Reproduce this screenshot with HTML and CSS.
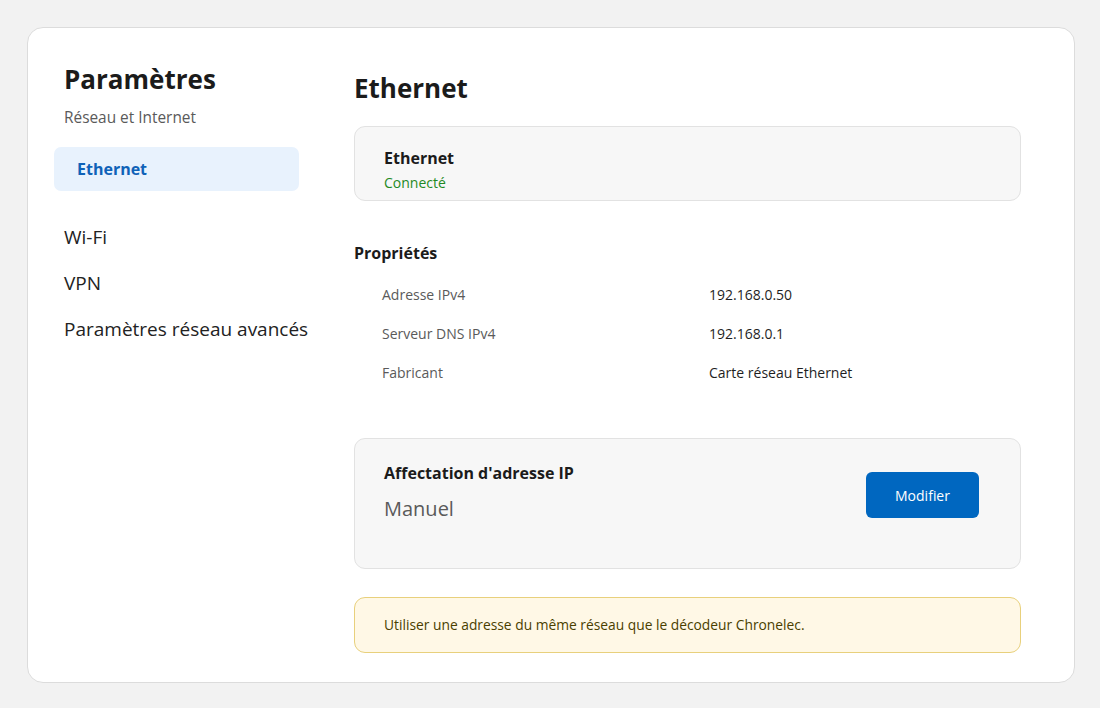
FILE: index.html
```html
<!DOCTYPE html>
<html lang="fr">
<head>
<meta charset="utf-8">
<title>Paramètres</title>
<link rel="stylesheet" href="styles.css">
</head>
<body>
<div class="window">
  <aside class="sidebar">
    <h2 class="app-title">Paramètres</h2>
    <div class="app-subtitle">Réseau et Internet</div>
    <div class="nav-item active">Ethernet</div>
    <ul class="nav-list">
      <li class="nav-item">Wi-Fi</li>
      <li class="nav-item">VPN</li>
      <li class="nav-item">Paramètres réseau avancés</li>
    </ul>
  </aside>
  <main class="content">
    <h1 class="page-title">Ethernet</h1>
    <section class="panel status-panel">
      <div class="panel-title">Ethernet</div>
      <div class="status-ok">Connecté</div>
    </section>

    <h3 class="section-title">Propriétés</h3>
    <dl class="props">
      <dt>Adresse IPv4</dt><dd>192.168.0.50</dd>
      <dt>Serveur DNS IPv4</dt><dd>192.168.0.1</dd>
      <dt>Fabricant</dt><dd>Carte réseau Ethernet</dd>
    </dl>

    <section class="panel ip-panel">
      <div class="ip-text">
        <div class="panel-title">Affectation d'adresse IP</div>
        <div class="ip-mode">Manuel</div>
      </div>
      <button class="btn-primary" type="button">Modifier</button>
    </section>

    <div class="notice">Utiliser une adresse du même réseau que le décodeur Chronelec.</div>
  </main>
</div>
</body>
</html>
```

FILE: styles.css
```css
* {
  box-sizing: border-box;
}

html, body {
  margin: 0;
  padding: 0;
}

body {
  background: #f2f2f2;
  font-family: "Open Sans", "Noto Sans", sans-serif;
  color: #1f1f1f;
  padding: 27px 26px 26px 27px;
}

.window {
  width: 1048px;
  height: 656px;
  background: #ffffff;
  border: 1px solid #dcdcdc;
  border-radius: 16px;
  display: grid;
  grid-template-columns: 245px 667px;
  column-gap: 55px;
  padding: 0 0 0 26px;
}

/* ---- sidebar ---- */
.sidebar {
  padding-top: 35px;
}

.app-title {
  margin: 0 0 0 10px;
  font-size: 26px;
  line-height: 32px;
  font-weight: 700;
  color: #1b1b1b;
}

.app-subtitle {
  margin: 13px 0 0 10px;
  font-size: 15.4px;
  line-height: 20px;
  color: #5a5a5a;
}

.nav-item {
  font-size: 19px;
  line-height: 46px;
  color: #222222;
  padding-left: 10px;
  white-space: nowrap;
}

.nav-item.active {
  margin-top: 19px;
  height: 44px;
  line-height: 45px;
  padding-left: 23px;
  background: #e8f2fd;
  border-radius: 7px;
  color: #0f62b8;
  font-size: 16px;
  font-weight: 700;
}

.nav-list {
  list-style: none;
  margin: 23px 0 0;
  padding: 0;
}

/* ---- content ---- */
.content {
  padding-top: 44px;
}

.page-title {
  margin: 0;
  font-size: 26px;
  line-height: 32px;
  font-weight: 700;
  color: #1b1b1b;
}

.panel {
  background: #f7f7f7;
  border: 1px solid #e2e2e2;
  border-radius: 11px;
}

.panel-title {
  font-size: 16px;
  line-height: 22px;
  font-weight: 700;
  color: #1b1b1b;
}

.status-panel {
  margin-top: 22px;
  height: 75px;
  padding: 20px 29px 0;
}

.status-ok {
  margin-top: 4px;
  font-size: 14px;
  line-height: 20px;
  color: #1f8a24;
}

.section-title {
  margin: 41px 0 0;
  font-size: 16px;
  line-height: 22px;
  font-weight: 700;
  color: #1b1b1b;
}

.props {
  margin: 11px 0 0;
  display: grid;
  grid-template-columns: 327px 1fr;
  padding-left: 28px;
  font-size: 14px;
}

.props dt,
.props dd {
  margin: 0;
  line-height: 39px;
}

.props dt {
  color: #5a5a5a;
}

.props dd {
  color: #1f1f1f;
}

.ip-panel {
  margin-top: 46px;
  height: 131px;
  padding: 23px 41px 0 29px;
  display: flex;
  justify-content: space-between;
  align-items: flex-start;
}

.ip-mode {
  margin-top: 11px;
  font-size: 20px;
  line-height: 28px;
  color: #5a5a5a;
}

.btn-primary {
  margin-top: 10px;
  width: 113px;
  height: 46px;
  border: none;
  border-radius: 6px;
  background: #0067c0;
  color: #ffffff;
  font-family: inherit;
  font-size: 14px;
}

.notice {
  margin-top: 28px;
  height: 56px;
  padding: 17px 29px 0;
  background: #fff8e6;
  border: 1px solid #e8d07c;
  border-radius: 11px;
  font-size: 13.8px;
  line-height: 20px;
  color: #4a3f00;
}
```
